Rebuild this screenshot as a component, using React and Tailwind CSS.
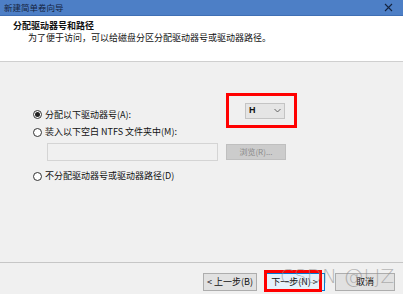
import React from "react";

const font = { fontFamily: '"Noto Sans CJK SC", "Microsoft YaHei", sans-serif' };

function Radio({ checked }) {
  return (
    <span className="w-[9px] h-[9px] rounded-full border border-[#333] bg-white flex items-center justify-center shrink-0">
      {checked && <span className="w-[5px] h-[5px] rounded-full bg-[#222]" />}
    </span>
  );
}

export default function App() {
  return (
    <div style={font} className="w-[403px] h-[294px] flex flex-col bg-[#f0f0f0] text-[#111] relative overflow-hidden">
      <div className="h-[16px] shrink-0 bg-[#4d7fc6] border-b border-[#3f6fb4] flex items-center justify-between pl-[4px] pr-[10px]">
        <span className="text-[8.5px] leading-none text-[#15243f]">新建简单卷向导</span>
        <svg width="9" height="9" viewBox="0 0 9 9">
          <path d="M1 1L8 8M8 1L1 8" stroke="#15243f" strokeWidth="1.1" />
        </svg>
      </div>

      <div className="h-[46px] shrink-0 bg-white border-b border-[#cfcfcf] pl-[13px] pt-[4px]">
        <div className="text-[9px] leading-[12px] font-bold">分配驱动器号和路径</div>
        <div className="text-[9px] leading-[12px] pl-[15px]">为了便于访问，可以给磁盘分区分配驱动器号或驱动器路径。</div>
      </div>

      <div className="flex-1 flex flex-col pl-[33px] text-[9px]">
        <div className="h-[31px] shrink-0" />
        <div className="flex items-start h-[34px] shrink-0">
          <div className="flex items-center gap-[3px] mt-[15px] w-[193px]">
            <Radio checked />
            <span>分配以下驱动器号(A):</span>
          </div>
          <div className="border-[3px] border-[#ff0000] w-[71px] h-[35px] flex items-center pl-[16px]">
            <div className="w-[40px] h-[16px] bg-[#e5e5e5] border border-[#c4c4c4] flex items-center justify-between px-[3px]">
              <span className="font-bold text-[9px] leading-none" style={{ fontFamily: '"Liberation Sans", sans-serif' }}>H</span>
              <svg width="7" height="5" viewBox="0 0 7 5">
                <path d="M0.5 1L3.5 4L6.5 1" stroke="#555" strokeWidth="0.9" fill="none" />
              </svg>
            </div>
          </div>
        </div>
        <div className="flex items-center gap-[3px] mt-[-1px] h-[12px]">
          <Radio />
          <span>装入以下空白 NTFS 文件夹中(M):</span>
        </div>
        <div className="flex items-center mt-[5px] pl-[14px] gap-[8px]">
          <div className="w-[171px] h-[18px] bg-[#f0f0f0] border border-[#d4d4d4]" />
          <div className="w-[60px] h-[16px] bg-[#cccccc] border border-[#bfbfbf] flex items-center justify-center text-[8px] text-[#8a8a8a]">浏览(R)...</div>
        </div>
        <div className="flex items-center gap-[3px] mt-[9px] h-[12px]">
          <Radio />
          <span>不分配驱动器号或驱动器路径(D)</span>
        </div>
      </div>

      <div className="h-[32px] shrink-0 border-t border-[#c6c6c6] flex items-start pt-[10px] pl-[203px] text-[9px]">
        <div className="w-[54px] h-[18px] bg-[#e1e1e1] border border-[#adadad] flex items-center justify-center">&lt; 上一步(B)</div>
        <div className="relative ml-[7px] w-[61px] h-[18px] bg-[#e5f1fb] border border-[#0078d7] flex items-center justify-center">
          下一步(N) &gt;
          <div className="absolute left-[-1px] top-[-4px] w-[58px] h-[22px] border-[3px] border-[#ff0000]" />
        </div>
        <div className="ml-[10px] w-[60px] h-[18px] bg-[#e1e1e1] border border-[#adadad] flex items-center justify-center">取消</div>
      </div>

      <div
        className="absolute left-[280px] top-[266px] whitespace-nowrap text-[20px] leading-none text-[#8c8c8c]/60 pointer-events-none"
        style={{ fontFamily: '"DejaVu Sans", sans-serif', fontWeight: 200 }}
      >
        CSDN @LJZ
      </div>
    </div>
  );
}
